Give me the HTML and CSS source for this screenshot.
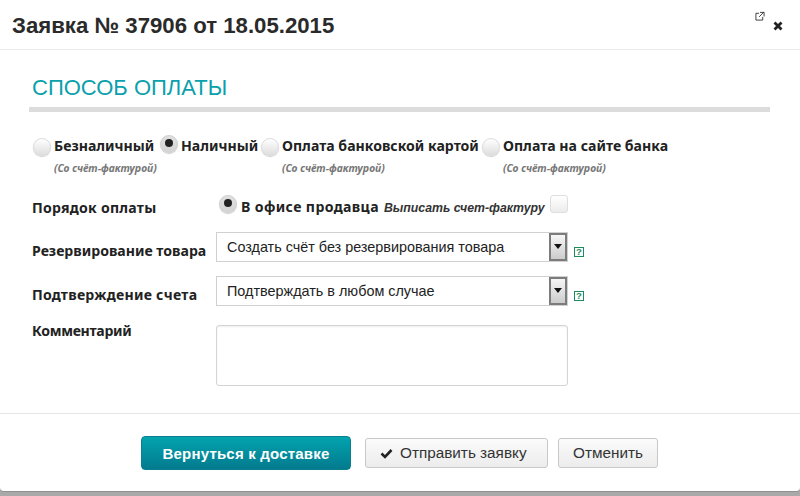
FILE: index.html
```html
<!DOCTYPE html>
<html lang="ru">
<head>
<meta charset="utf-8">
<title>Заявка № 37906</title>
<link rel="stylesheet" href="styles.css">
</head>
<body>
<div class="modal">
  <header class="head">
    <h1 class="title">Заявка № 37906 от 18.05.2015</h1>
    <div class="head-icons">
      <svg class="ic-open" width="10" height="10" viewBox="0 0 11 11"><path d="M4.5 2.5H1v7.5h7.5V6.5M5.5 1.5h4.5V6M10 1L4.5 6.5" fill="none" stroke="#333" stroke-width="1"/></svg>
      <svg class="ic-close" width="10" height="10" viewBox="0 0 10 10"><path d="M1.5 1.5L8.5 8.5M8.5 1.5L1.5 8.5" fill="none" stroke="#222" stroke-width="2.8"/></svg>
    </div>
  </header>
  <main class="body">
    <h2 class="section">СПОСОБ ОПЛАТЫ</h2>
    <div class="methods">
      <div class="method m1">
        <div class="opt"><span class="radio"></span><span class="lbl">Безналичный</span></div>
        <div class="note">(Со счёт-фактурой)</div>
      </div>
      <div class="method m2">
        <div class="opt"><span class="radio on raised"></span><span class="lbl">Наличный</span></div>
      </div>
      <div class="method m3">
        <div class="opt"><span class="radio"></span><span class="lbl">Оплата банковской картой</span></div>
        <div class="note">(Со счёт-фактурой)</div>
      </div>
      <div class="method m4">
        <div class="opt"><span class="radio"></span><span class="lbl">Оплата на сайте банка</span></div>
        <div class="note">(Со счёт-фактурой)</div>
      </div>
    </div>
    <div class="form">
      <div class="row r-order">
        <div class="name wide">Порядок оплаты</div>
        <div class="val order">
          <span class="radio on"></span><span class="lbl office">В офисе продавца</span>
          <em class="invoice">Выписать счет-фактуру</em><span class="check"></span>
        </div>
      </div>
      <div class="row r-sel">
        <div class="name">Резервирование товара</div>
        <div class="val">
          <div class="select"><span class="sel-text">Создать счёт без резервирования товара</span><span class="sel-btn"><i class="arrow"></i></span></div>
          <span class="help">?</span>
        </div>
      </div>
      <div class="row r-sel">
        <div class="name wide">Подтверждение счета</div>
        <div class="val">
          <div class="select"><span class="sel-text">Подтверждать в любом случае</span><span class="sel-btn"><i class="arrow"></i></span></div>
          <span class="help">?</span>
        </div>
      </div>
      <div class="row r-com">
        <div class="name narrow">Комментарий</div>
        <div class="val"><div class="area"></div></div>
      </div>
    </div>
  </main>
  <footer class="foot">
    <button class="btn primary">Вернуться к доставке</button>
    <button class="btn send"><svg class="ic-check" width="13" height="11" viewBox="0 0 13 11"><path d="M1.5 5.5L5 9L11.5 2" fill="none" stroke="#222" stroke-width="2.6"/></svg>Отправить заявку</button>
    <button class="btn cancel">Отменить</button>
  </footer>
</div>
</body>
</html>
```
FILE: styles.css
```css
* { box-sizing: border-box; }
html, body { margin: 0; padding: 0; }
body {
  width: 800px; height: 496px; overflow: hidden;
  background: #a9a9a9;
  font-family: "Liberation Sans", Arial, sans-serif;
  color: #222;
}
.modal {
  width: 800px; height: 492px;
  background: #fff;
  border-bottom: 1px solid #8f8f8f;
  border-radius: 0 0 4px 4px;
  display: flex; flex-direction: column;
}
.head {
  height: 50px; flex: none;
  border-bottom: 1px solid #ececec;
  padding: 0 12px;
  display: flex; justify-content: space-between;
}
.title {
  margin: 13px 0 0;
  font-size: 22.2px; line-height: 26px; font-weight: bold; color: #2a2a2a;
}
.head-icons { display: flex; gap: 8px; margin-right: 5px; }
.ic-open { margin-top: 11px; }
.ic-close { margin-top: 21px; }
.body { flex: 1; padding: 0 30px 0 29px; }
.section {
  margin: 24px 0 0; padding: 0 0 6px 3px;
  border-bottom: 5px solid #dcdcdc;
  box-sizing: content-box; height: 27px;
  font-size: 22px; line-height: 27px; font-weight: normal; color: #0aa0ac;
}
.methods { display: flex; margin-top: 24px; padding-left: 4px; height: 54px; }
.method { flex: none; }
.m1 { width: 127px; }
.m2 { width: 101px; }
.m3 { width: 221px; }
.opt { display: flex; align-items: flex-start; height: 20px; }
.radio {
  flex: none; width: 18px; height: 18px; border-radius: 50%;
  margin-top: 2px; margin-right: 3px;
  background: linear-gradient(#ffffff, #dedede);
  border: 1px solid #dcdcdc;
  box-shadow: 0 1px 1px #ccc;
  position: relative; display: inline-block;
}
.radio.raised { margin-top: -1px; }
.radio.on { background: linear-gradient(#e0e0e0, #d4d4d4); border-color: #cfcfcf; }
.radio.on::after {
  content: ""; position: absolute; left: 4px; top: 3px;
  width: 8px; height: 8px; border-radius: 50%; background: #222;
}
.lbl, .name {
  font-family: "Noto Sans", "Open Sans", sans-serif;
  font-size: 14.1px; line-height: 20px; font-weight: bold; color: #222; white-space: nowrap;
}
.wide { letter-spacing: 0.25px; }
.narrow { letter-spacing: -0.3px; }
.office { letter-spacing: 0.38px; }
.note {
  margin: 5px 0 0 21px;
  font-family: "Noto Sans", sans-serif;
  font-size: 10.4px; line-height: 14px; font-weight: bold; font-style: italic; color: #777;
}
.form { display: flex; flex-direction: column; margin-left: 3px; }
.row { display: flex; }
.name { width: 184px; flex: none; }
.val { display: flex; align-items: flex-start; }
.r-order { height: 35px; margin-top: 7px; }
.r-order .name { padding-top: 1px; }
.order .radio { margin-left: 3px; margin-right: 4px; margin-top: -2px; }
.invoice {
  margin: 3px 0 0 5px;
  font-size: 12.3px; line-height: 16px; font-weight: bold; font-style: italic; color: #333;
  white-space: nowrap;
}
.check {
  width: 18px; height: 18px; margin: -2px 0 0 5px;
  border: 1px solid #dedede; border-radius: 3px;
  background: linear-gradient(#fff, #ececec);
}
.r-sel { height: 44px; }
.r-sel .name { padding-top: 9px; }
.select {
  width: 352px; height: 30px;
  border: 1px solid #d0d0d0; background: #fff;
  display: flex; justify-content: space-between;
}
.sel-text { font-size: 14.4px; line-height: 28px; padding-left: 10px; color: #222; }
.sel-btn {
  width: 18px; height: 28px;
  border: 2px solid #7c7c7c; background: linear-gradient(#f6f6f6, #cccccc);
  display: flex; justify-content: center; padding-top: 9px;
}
.arrow { width: 0; height: 0; border: 4px solid transparent; border-top: 5px solid #111; border-bottom: 0; }
.help {
  width: 10px; height: 10px; margin: 15px 0 0 6px;
  border: 1px solid #1f8a5c; color: #1f8a5c;
  font-size: 9.5px; line-height: 8px; font-weight: bold; text-align: center;
}
.r-com { height: 66px; }
.r-com .name { margin-top: 1px; }
.r-com .val { margin-top: 5px; }
.area {
  width: 352px; height: 61px;
  border: 1px solid #d4d4d4; border-radius: 3px; background: #fff;
  box-shadow: inset 0 1px 2px #eee;
}
.foot {
  height: 78px; flex: none;
  border-top: 1px solid #e4e4e4;
  display: flex; align-items: flex-start; gap: 10px;
  padding: 22px 0 0 141px;
}
.btn {
  height: 30px; padding: 0 0 0 14px; margin-top: 2px;
  border: 1px solid #c8c8c8; border-radius: 3px;
  background: linear-gradient(#fbfbfb, #ececec);
  font-family: "Liberation Sans", sans-serif; font-size: 15.3px; color: #333;
  display: flex; align-items: center; gap: 7px;
}
.send { width: 183px; }
.cancel { width: 100px; }
.btn.primary {
  width: 210px; height: 34px; margin: 0 4px 0 0; padding: 0; justify-content: center;
  border: 1px solid #0a7f90; border-radius: 4px;
  background: linear-gradient(#03a3ae, #027b8e);
  font-size: 15px; color: #fff; font-weight: bold; letter-spacing: 0.2px;
}
```
